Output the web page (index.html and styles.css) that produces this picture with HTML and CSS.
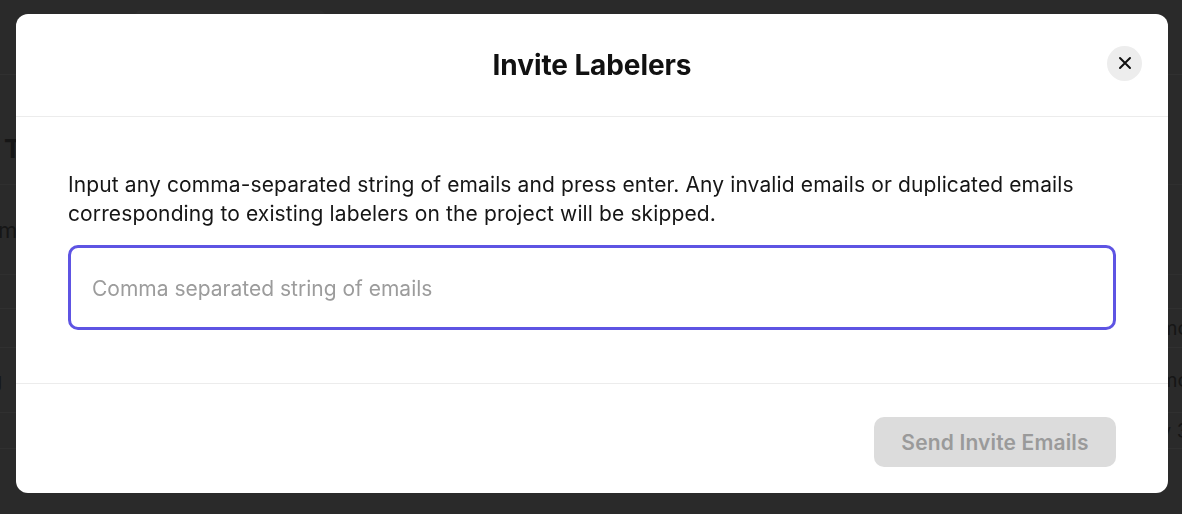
FILE: index.html
```html
<!DOCTYPE html>
<html lang="en">
<head>
<meta charset="utf-8">
<title>Invite Labelers</title>
<link rel="stylesheet" href="styles.css">
</head>
<body>
<div class="page">
  <div class="topbar"><div class="topbtn"></div></div>
  <div class="heading">Team</div>
  <div class="subrow">members</div>
  <div class="table">
    <div class="row row-a"><span class="cell-l"></span><span class="cell-r"></span></div>
    <div class="row row-b"><span class="cell-l"></span><span class="cell-r">mo</span></div>
    <div class="row row-c"><span class="cell-l">g</span><span class="cell-r">mo</span></div>
    <div class="row row-d"><span class="cell-l"></span><span class="cell-r">y 3</span></div>
  </div>
</div>

<div class="overlay">
  <div class="modal" role="dialog" aria-labelledby="modal-title">
    <header class="modal-header">
      <span></span>
      <h2 class="modal-title" id="modal-title">Invite Labelers</h2>
      <button class="close-btn" aria-label="Close">
        <svg width="14" height="14" viewBox="0 0 14 14" aria-hidden="true">
          <path d="M2 2 L12 12 M12 2 L2 12" stroke="#111" stroke-width="2" stroke-linecap="round" fill="none"/>
        </svg>
      </button>
    </header>
    <div class="modal-body">
      <p class="desc">Input any comma-separated string of emails and press enter. Any invalid emails or duplicated emails corresponding to existing labelers on the project will be skipped.</p>
      <input class="email-input" type="text" placeholder="Comma separated string of emails">
    </div>
    <footer class="modal-footer">
      <button class="send-btn" disabled>Send Invite Emails</button>
    </footer>
  </div>
</div>
</body>
</html>
```

FILE: styles.css
```css
html, body {
  margin: 0;
  height: 514px;
  overflow: hidden;
}

body {
  background: #2a2a2a;
  font-family: Inter, "Noto Sans", sans-serif;
  color: #161616;
}

/* faint page behind the overlay */
.page {
  display: flex;
  flex-direction: column;
  margin-left: -10px;
  color: #161616;
}

.topbar {
  height: 75px;
  border-bottom: 1px solid #303030;
  box-sizing: border-box;
  padding: 10px 0 0 145px;
}

.topbtn {
  width: 190px;
  height: 40px;
  border-radius: 6px;
  background: #2d2d2d;
}

.heading {
  height: 110px;
  box-sizing: border-box;
  padding: 58px 0 0 14px;
  font-size: 26px;
  font-weight: 700;
  border-bottom: 1px solid #2f2f2f;
}

.subrow {
  height: 90px;
  box-sizing: border-box;
  padding: 32px 0 0 8px;
  font-size: 22px;
  border-bottom: 1px solid #2f2f2f;
}

.table {
  display: flex;
  flex-direction: column;
}

.row {
  display: flex;
  justify-content: space-between;
  align-items: center;
  font-size: 20px;
  border-bottom: 1px solid #303030;
  width: 1206px;
}

.row-a { height: 33px; }
.row-b { height: 38px; }
.row-c { height: 64px; }
.row-d { height: 35px; }

.cell-r { width: 36px; }

/* overlay + modal */
.overlay {
  position: fixed;
  inset: 0;
  display: flex;
  justify-content: center;
  align-items: flex-start;
  padding: 14px 0 0 2px;
}

.modal {
  width: 1152px;
  height: 479px;
  background: #ffffff;
  border-radius: 12px;
  display: flex;
  flex-direction: column;
  overflow: hidden;
}

.modal-header {
  height: 103px;
  box-sizing: border-box;
  border-bottom: 1px solid #ececec;
  display: grid;
  grid-template-columns: 1fr auto 1fr;
  align-items: center;
}

.modal-title {
  margin: 0;
  font-size: 28px;
  font-weight: 700;
  color: #111;
  letter-spacing: -0.1px;
}

.close-btn {
  justify-self: end;
  margin-right: 26px;
  margin-top: -4px;
  width: 35px;
  height: 35px;
  border: none;
  border-radius: 50%;
  background: #ededed;
  display: flex;
  align-items: center;
  justify-content: center;
  padding: 0;
}

.modal-body {
  flex: 1;
  padding: 53px 52px 0;
  display: flex;
  flex-direction: column;
}

.desc {
  margin: 0;
  font-size: 21px;
  line-height: 29px;
  letter-spacing: 0.12px;
  color: #161616;
}

.email-input {
  margin-top: 17px;
  height: 85px;
  box-sizing: border-box;
  width: 100%;
  border: 3px solid #5e54e3;
  border-radius: 10px;
  padding: 2px 21px 0;
  font-family: inherit;
  font-size: 21px;
  color: #161616;
  outline: none;
  background: #fff;
}

.email-input::placeholder {
  color: #9c9c9c;
}

.modal-footer {
  height: 110px;
  box-sizing: border-box;
  border-top: 1px solid #ececec;
  padding: 33px 52px 26px;
  display: flex;
  justify-content: flex-end;
}

.send-btn {
  width: 242px;
  height: 50px;
  border: none;
  border-radius: 10px;
  background: #dcdcdc;
  color: #9a9a9a;
  font-family: inherit;
  font-size: 21px;
  font-weight: 600;
  letter-spacing: 0.15px;
  padding: 0;
}
```
